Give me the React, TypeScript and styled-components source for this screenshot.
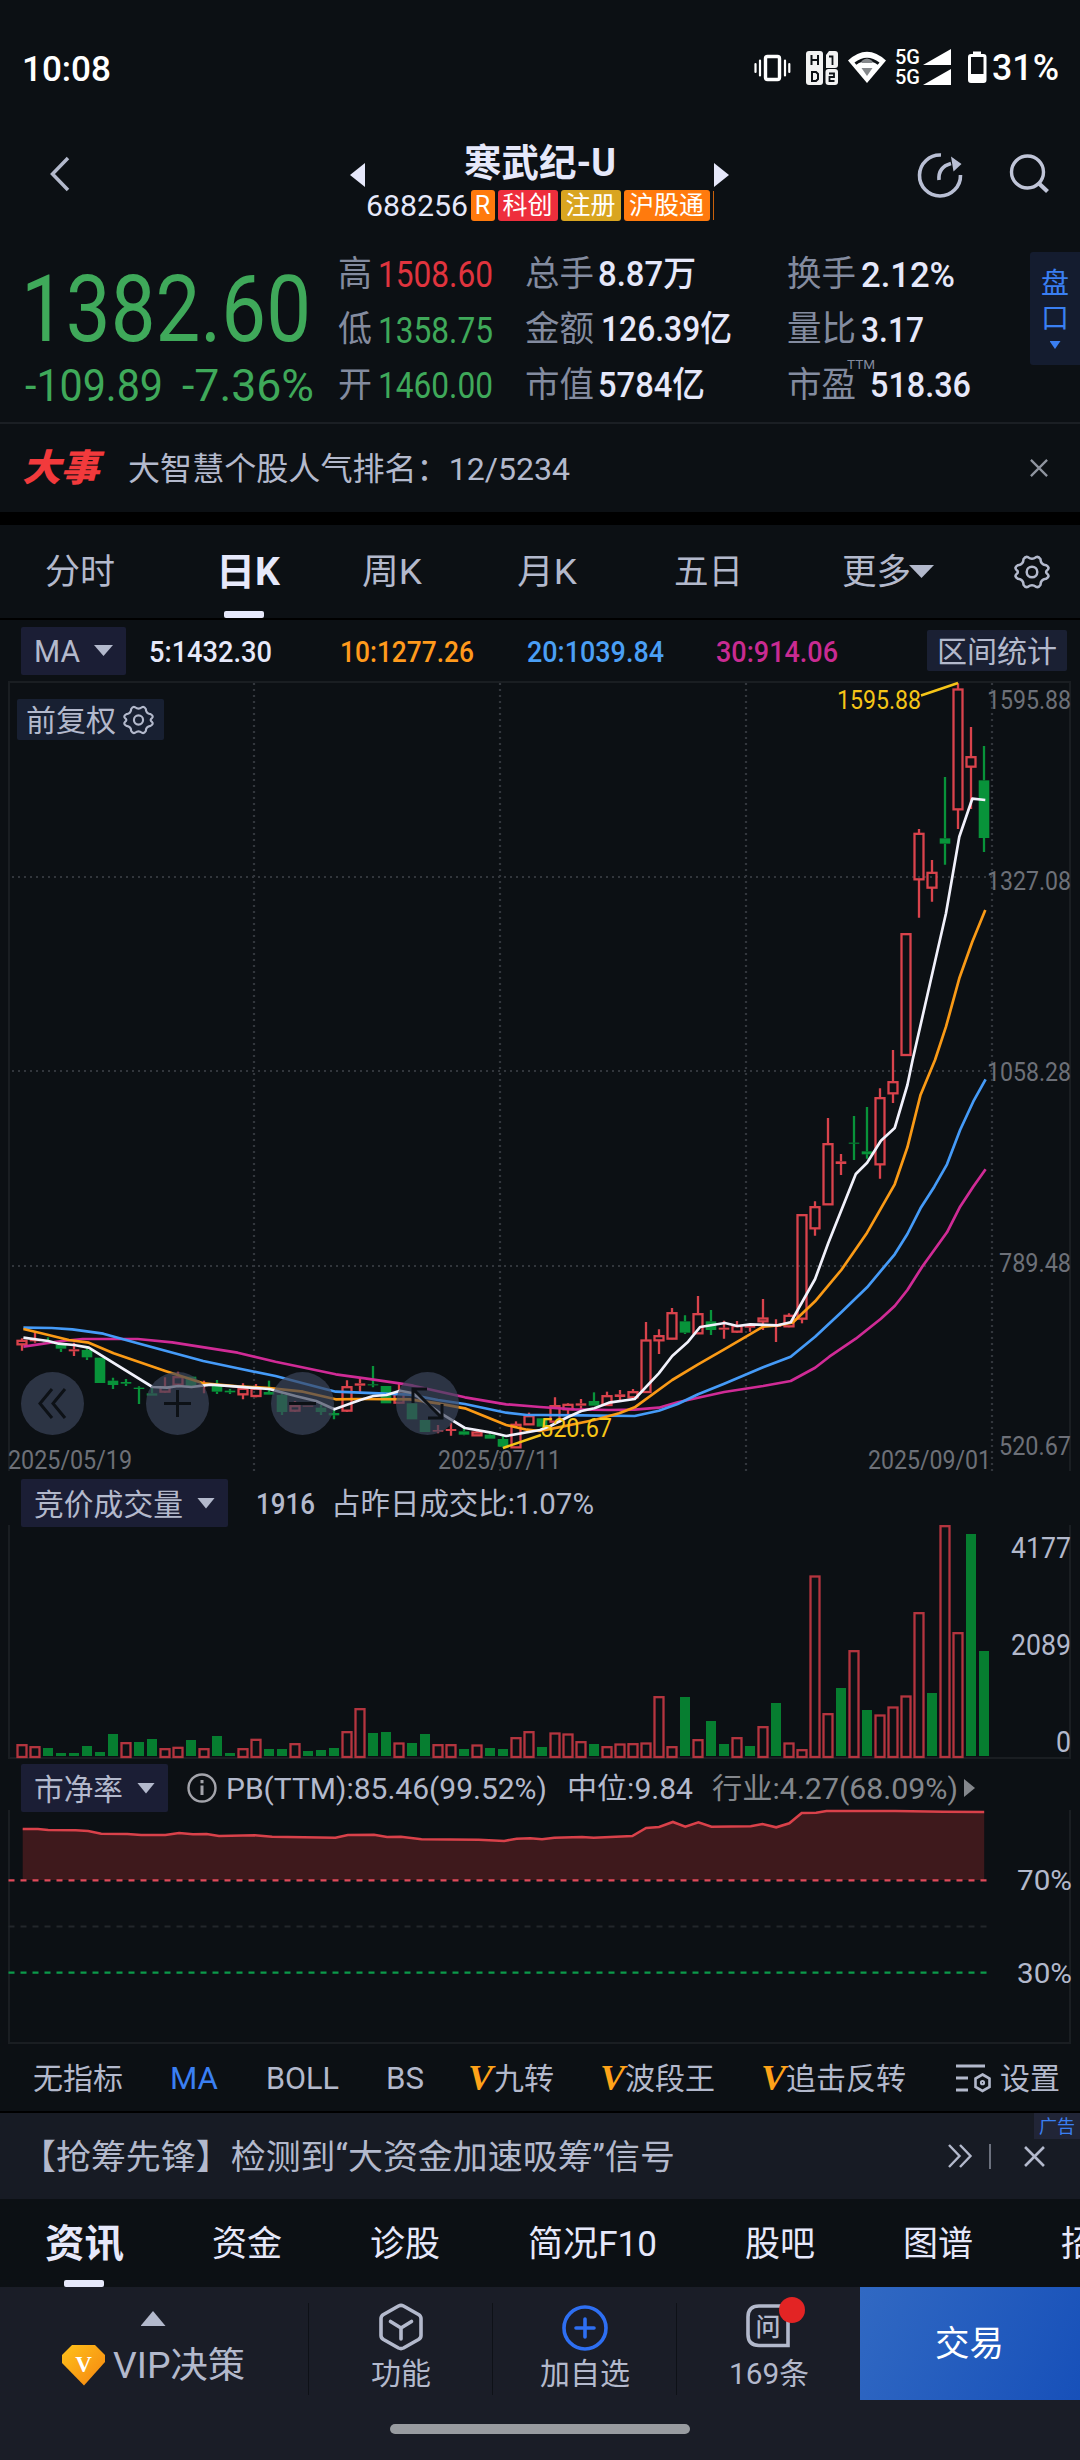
import React, { useLayoutEffect, useRef, useState } from "react";
import styled, { createGlobalStyle } from "styled-components";

const c = {
  bg: "#0c1014",
  panel: "#1a1d27",
  text: "#b3b9cc",
  bright: "#e6e8fa",
  label: "#838b9f",
  red: "#e0343e",
  green: "#3fa95a",
  candleRed: "#d9434c",
  candleGreen: "#08933a",
  blue: "#3a7ff2",
  orange: "#ff9a1c",
  axis: "#6d7078",
};

const FONT = `Roboto, "Noto Sans CJK SC", sans-serif`;

const Global = createGlobalStyle`
  * { box-sizing: border-box; }
  body { margin: 0; background: ${c.bg}; font-family: ${FONT}; }
  svg { display: block; flex: none; overflow: visible; }
  svg text { font-family: ${FONT}; }
`;

const Page = styled.main`
  width: 1080px;
  height: 2460px;
  overflow: hidden;
  display: flex;
  flex-direction: column;
  background: ${c.bg};
  color: ${c.text};
`;

/* Text that is condensed or widened to a known column width */
const FitBox = styled.span<{ $w: number; $size: number; $ml: number; $color?: string; $weight: number; $italic?: boolean; $serif?: boolean }>`
  display: block;
  flex: none;
  width: ${(p) => p.$w}px;
  margin-left: ${(p) => p.$ml}px;
  padding-top: 3px;
  font-size: ${(p) => p.$size}px;
  line-height: 1.2;
  font-weight: ${(p) => p.$weight};
  font-style: ${(p) => (p.$italic ? "italic" : "normal")};
  font-family: ${(p) => (p.$serif ? `"Liberation Serif", serif` : FONT)};
  color: ${(p) => p.$color ?? "inherit"};
  white-space: nowrap;
`;
const FitInner = styled.span`
  display: inline-block;
  transform-origin: 0 50%;
`;

type FitProps = { w: number; size: number; ml?: number; color?: string; weight?: number; italic?: boolean; serif?: boolean; children: React.ReactNode };
function Fit({ w, size, ml = 0, color, weight = 400, italic, serif, children }: FitProps) {
  const ref = useRef<HTMLSpanElement>(null);
  const [scale, setScale] = useState(1);
  useLayoutEffect(() => {
    if (ref.current) setScale((w / ref.current.getBoundingClientRect().width) * scale);
    // eslint-disable-next-line react-hooks/exhaustive-deps
  }, [w, size]);
  return (
    <FitBox $w={w} $size={size} $ml={ml} $color={color} $weight={weight} $italic={italic} $serif={serif}>
      <FitInner ref={ref} style={{ transform: `scaleX(${scale})` }}>{children}</FitInner>
    </FitBox>
  );
}

const Bar = styled.div<{ $h: number; $pl?: number; $pt?: number; $bg?: string; $line?: boolean }>`
  flex: none;
  height: ${(p) => p.$h}px;
  padding-left: ${(p) => p.$pl ?? 0}px;
  padding-top: ${(p) => p.$pt ?? 0}px;
  display: flex;
  align-items: center;
  background: ${(p) => p.$bg ?? "transparent"};
  border-bottom: ${(p) => (p.$line ? "2px solid #000" : "none")};
`;
const Gap = styled.i<{ $w: number }>`
  flex: none;
  width: ${(p) => p.$w}px;
`;

/* ---------- status bar ---------- */
const StatusBar = styled(Bar)`
  color: #fff;
`;
function StatusIcons() {
  return (
    <svg width="235" height="40" viewBox="753 47 235 40" fill="none" stroke="#fff">
      <g strokeWidth="2.2" strokeLinecap="round">
        <rect x="765.5" y="55.5" width="14" height="23" rx="2" strokeWidth="3.400" />
        <path d="M755.5 63v8M760 59.5v15M785 59.5v15M789.3 63v8" />
      </g>
      <g stroke="none">
        <rect x="806" y="50" width="17" height="34" rx="3" fill="#f2f2f2" />
        <path d="M829 50h6q3 0 3 3v11q0 3-3 3h-9v-13z" fill="#f2f2f2" />
        <rect x="825.500" y="68" width="12.500" height="16" rx="3" fill="#f2f2f2" />
      </g>
      <g stroke={c.bg} strokeWidth="2">
        <path d="M811.500 54v10M818 54v10M811.500 59h7" />
        <path d="M812 71v9h4l2-2v-5l-2-2z" />
        <path d="M829 55.500h3.500v8.500M829 72.500h5v3.500h-4.500v4h5" strokeWidth="1.800" />
      </g>
      <g stroke="none">
        <path d="M848 59.500q19-17.500 38 0l-19 22.500z" fill="#fff" />
        <path d="M854.500 61.500q12.500-9.500 25 0l-1.800 2.300q-10.700-7.500-21.400 0z" fill={c.bg} />
        <path d="M861.500 60q5.500-5 11 0v2h-11zM861.500 67h11l-5.500 8z" fill="#85888b" />
        <path d="M923 64L951 48v16zM923 84l28-16v16z" fill="#fff" />
      </g>
      <g fill="#fff" stroke="none" fontSize="20" fontWeight="500">
        <text x="895" y="63" textLength="25" lengthAdjust="spacingAndGlyphs">5G</text>
        <text x="895" y="83" textLength="25" lengthAdjust="spacingAndGlyphs">5G</text>
      </g>
      <rect x="969.500" y="54.500" width="15.500" height="26" rx="1.500" strokeWidth="3" />
      <path d="M973 50.500h8v4h-8zM969 73h17v8h-17z" fill="#fff" stroke="none" />
    </svg>
  );
}

/* ---------- header ---------- */
const Header = styled.header`
  flex: none;
  height: 107px;
  display: flex;
  align-items: flex-start;
  padding: 3px 0 0 49px;
`;
const TitleBlock = styled.div`
  width: 349px;
  display: flex;
  flex-direction: column;
  align-items: center;
  padding-top: 3px;
`;
const CodeRow = styled.div`
  display: flex;
  align-items: center;
  gap: 3px;
  height: 32px;
  color: ${c.bright};
  margin-top: 3px;
`;
const Tag = styled.span<{ $bg: string; $w: number }>`
  width: ${(p) => p.$w}px;
  height: 31px;
  border-radius: 3px;
  background: ${(p) => p.$bg};
  color: #fff;
  font-size: 25px;
  line-height: 32px;
  text-align: center;
  white-space: nowrap;
`;
const TagEdge = styled.i`
  width: 1px;
  height: 29px;
  background: #c9600a;
`;
const IconSlot = styled.div<{ $mt?: number; $ml: number }>`
  margin-top: ${(p) => p.$mt ?? 0}px;
  margin-left: ${(p) => p.$ml}px;
`;

/* ---------- quote ---------- */
const Quote = styled.section`
  flex: none;
  height: 185px;
  display: flex;
  border-bottom: 2px solid #1b1f24;
`;
const PriceColumn = styled.div`
  width: 338px;
  padding: 13px 0 0 21px;
  color: ${c.green};
`;
const ChangeRow = styled.div`
  display: flex;
  margin-top: -8px;
`;
const Stats = styled.div<{ $w: number }>`
  width: ${(p) => p.$w}px;
  display: flex;
  flex-direction: column;
  padding-top: 7px;
`;
const Stat = styled.div`
  height: 55.3px;
  display: flex;
  align-items: center;
  color: ${c.label};
  position: relative;
`;
const Ttm = styled.sup`
  position: absolute;
  left: 60px;
  top: 0;
  font-size: 13.5px;
  line-height: 14px;
`;
const SideTab = styled.div`
  width: 50px;
  height: 113px;
  margin: 13px 0 0 auto;
  background: #141c2f;
  border-radius: 3px 0 0 3px;
  color: ${c.blue};
  display: flex;
  flex-direction: column;
  align-items: center;
  gap: 0;
  padding-top: 14px;
  font-size: 28px;
  line-height: 35px;
`;

const Chip = styled.div<{ $w: number; $h: number; $bg?: string }>`
  flex: none;
  width: ${(p) => p.$w}px;
  height: ${(p) => p.$h}px;
  display: flex;
  align-items: center;
  background: ${(p) => p.$bg ?? "#1b1e35"};
  border-radius: 2px;
`;
const Tri = styled.i<{ $w: number; $h: number; $ml?: number; $mt?: number; $color?: string; $up?: boolean }>`
  display: block;
  flex: none;
  width: ${(p) => p.$w}px;
  height: ${(p) => p.$h}px;
  margin-left: ${(p) => p.$ml ?? 0}px;
  margin-top: ${(p) => p.$mt ?? 0}px;
  background: ${(p) => p.$color ?? c.text};
  clip-path: ${(p) => (p.$up ? "polygon(50% 0, 100% 100%, 0 100%)" : "polygon(0 0, 100% 0, 50% 100%)")};
`;
const SideTri = styled.i<{ $w: number; $h: number; $ml?: number; $left?: boolean; $color?: string }>`
  display: block;
  flex: none;
  width: ${(p) => p.$w}px;
  height: ${(p) => p.$h}px;
  margin-left: ${(p) => p.$ml ?? 0}px;
  background: ${(p) => p.$color ?? c.bright};
  clip-path: ${(p) => (p.$left ? "polygon(100% 0, 100% 100%, 0 50%)" : "polygon(0 0, 100% 50%, 0 100%)")};
`;

const TabItem = styled.div<{ $h: number }>`
  height: ${(p) => p.$h}px;
  display: flex;
  align-items: center;
  position: relative;
`;
const Underline = styled.i<{ $left: number }>`
  position: absolute;
  bottom: 0;
  left: ${(p) => p.$left}px;
  width: 40px;
  height: 7px;
  border-radius: 2px;
  background: ${c.bright};
`;

const Gear = ({ w, h, ml }: { w: number; h: number; ml: number }) => (
  <IconSlot $ml={ml}>
    <svg width={w} height={h} viewBox="0 0 36 34" fill="none" stroke={c.text} strokeWidth="2.500" strokeLinejoin="round">
      <path d="M9.500 4.200Q11.500 1 14 2.200Q18 5.200 22 2.200Q24.500 1 26.500 4.200Q26.500 9.500 32 10.200Q36 12.500 33.700 14.700Q30.500 17 33.700 19.300Q36 21.500 32 23.800Q26.500 24.500 26.500 29.800Q24.500 33 22 31.800Q18 28.800 14 31.800Q11.500 33 9.500 29.800Q9.500 24.500 4 23.800Q0 21.500 2.300 19.300Q5.500 17 2.300 14.700Q0 12.500 4 10.200Q9.500 9.500 9.500 4.200Z" />
      <circle cx="18" cy="17" r="5.300" />
    </svg>
  </IconSlot>
);

const Cross = ({ w, ml, color = c.text }: { w: number; ml: number; color?: string }) => (
  <IconSlot $ml={ml}>
    <svg width={w} height={w} viewBox="0 0 20 20" stroke={color} strokeWidth="2.500">
      <path d="M1 1L19 19M19 1L1 19" />
    </svg>
  </IconSlot>
);

/* ---------- chart data ---------- */
const STEP = 13;
const X0 = 22;
const barX = (i: number) => X0 + STEP * i;

type Candle = [0 | 1, number, number, number, number]; // rising, body top, body bottom, high, low
const early: Candle[] = [
  [1, 241, 253, 235, 272], [1, 240, 244, 213, 248], [0, 245, 252, 232, 252], [0, 255, 266, 250, 276], [1, 268, 274, 248, 288],
  [0, 270, 292, 262, 300], [0, 293, 369, 293, 369], [0, 362, 375, 353, 387], [0, 366, 371, 357, 378], [0, 383, 387, 379, 432],
  [0, 400, 407, 380, 407], [1, 380, 395, 352, 398], [1, 350, 374, 335, 382], [0, 350, 378, 350, 378], [1, 374, 378, 362, 400],
  [0, 378, 395, 360, 402], [0, 392, 397, 387, 402], [1, 385, 403, 370, 418], [1, 385, 408, 372, 412], [0, 396, 404, 362, 404],
  [0, 405, 456, 395, 465], [1, 437, 452, 423, 456], [1, 437, 440, 437, 440], [0, 443, 456, 435, 465], [0, 459, 466, 450, 478],
  [1, 380, 452, 361, 456], [1, 370, 377, 352, 396], [0, 373, 376, 318, 382], [0, 378, 430, 378, 430], [1, 400, 428, 370, 430],
  [0, 430, 478, 430, 478], [0, 480, 516, 480, 516], [1, 510, 515, 495, 520], [1, 507, 513, 488, 527], [0, 514, 524, 500, 526],
  [1, 516, 526, 514, 528], [0, 524, 536, 520, 536], [0, 537, 560, 528, 563], [1, 493, 562, 484, 562], [1, 467, 493, 458, 493],
];
const middle: Candle[] = [
  [0, 1075, 1100, 1075, 1100], [1, 1037, 1085, 1012, 1090], [1, 1033, 1048, 1030, 1065], [1, 1030, 1037, 1017, 1050], [0, 1023, 1037, 997, 1037],
  [1, 1007, 1035, 995, 1035], [1, 1003, 1011, 990, 1020], [1, 995, 1012, 987, 1018], [1, 840, 996, 786, 998], [1, 827, 841, 808, 882],
  [1, 758, 836, 744, 838], [0, 784, 818, 766, 822], [1, 761, 820, 708, 822], [0, 784, 810, 750, 825], [1, 803, 809, 782, 836],
  [1, 797, 815, 783, 818], [1, 795, 803, 790, 815], [1, 774, 784, 717, 810], [1, 795, 801, 778, 846], [1, 766, 799, 760, 802],
  [1, 464, 776, 464, 790], [1, 440, 505, 424, 527], [1, 251, 433, 174, 433], [1, 304, 312, 282, 345], [0, 248, 251, 168, 300],
  [0, 274, 283, 141, 296], [1, 113, 313, 85, 356], [1, 65, 100, -30, 129],
];
const late: Candle[] = [
  [1, 821, 1185, 821, 1185], [1, 520, 658, 507, 773], [1, 637, 683, 600, 725], [0, 535, 551, 351, 614], [1, 87, 448, 70, 507],
  [1, 290, 320, 201, 447], [0, 361, 534, 258, 576],
];
const at = (base: number) => (k: Candle): Candle => [k[0], base + k[1] / 3, base + k[2] / 3, base + k[3] / 3, base + k[4] / 3];
const candles: Candle[] = [...early.map(at(1260)), ...middle.map(at(1060)), ...late.map(at(660))];

type P = [number, number];
const path = (a: P[], b: P[], d: P[] = []) =>
  [
    ...a.map(([x, y]): P => [x / 2.904, 1260 + y / 3]),
    ...b.map(([x, y]): P => [540 + x / 2.904, 1060 + y / 3]),
    ...d.map(([x, y]): P => [740 + x / 3, 660 + y / 3]),
  ].map(([x, y]) => `${x.toFixed(1)},${y.toFixed(1)}`).join(" ");

const averages = [
  { color: "#d02b96", points: path(
    [[68, 260], [180, 243], [240, 237], [400, 237], [500, 247], [690, 278], [800, 305], [975, 343], [1060, 355], [1160, 370], [1200, 377], [1350, 412], [1470, 433]],
    [[0, 1041], [100, 1048], [200, 1050], [275, 1049], [345, 1043], [400, 1027], [535, 996], [648, 978], [728, 963], [799, 923], [840, 890], [917, 836], [990, 776], [1030, 738], [1067, 690], [1110, 620], [1182, 517], [1220, 440], [1258, 380], [1294, 328]]) },
  { color: "#459bf8", points: path(
    [[68, 203], [150, 204], [210, 208], [300, 221], [400, 250], [590, 303], [690, 325], [800, 348], [880, 370], [975, 395], [1100, 400], [1190, 404], [1272, 420], [1350, 432], [1470, 458], [1530, 465]],
    [[0, 1065], [120, 1066], [275, 1068], [345, 1052], [400, 1032], [459, 1003], [535, 971], [648, 922], [728, 890], [799, 830], [875, 757], [950, 682], [1030, 583], [1067, 522], [1105, 445], [1145, 380], [1182, 313], [1220, 210], [1258, 125], [1294, 58]]) },
  { color: "#fa9a16", points: path(
    [[68, 207], [120, 220], [200, 240], [258, 248], [330, 280], [480, 333], [590, 370], [690, 379], [782, 384], [880, 395], [975, 418], [1046, 417], [1190, 418], [1272, 430], [1350, 445], [1470, 495], [1530, 509]],
    [[0, 1113], [50, 1103], [158, 1080], [230, 1060], [275, 1042], [384, 960], [459, 913], [535, 868], [648, 800], [690, 796], [735, 787], [799, 724], [875, 630], [950, 518], [1030, 373], [1067, 262], [1105, 105], [1147, 0]],
    [[618, 1100], [658, 955], [697, 845], [736, 750]]) },
  { color: "#f1f1fb", points: path(
    [[68, 233], [140, 243], [170, 251], [215, 255], [258, 263], [443, 381], [485, 383], [518, 378], [556, 381], [612, 374], [690, 380], [782, 387], [858, 408], [918, 423], [971, 448], [1046, 420], [1084, 408], [1122, 405], [1162, 392], [1200, 400], [1272, 455], [1350, 504], [1423, 517], [1470, 528]],
    [[0, 1110], [30, 1098], [80, 1072], [120, 1053], [158, 1045], [200, 1028], [275, 1017], [345, 940], [384, 888], [430, 845], [465, 801], [537, 789], [573, 798], [611, 793], [690, 796], [728, 787], [799, 657], [837, 550], [917, 342], [950, 308], [990, 242], [1030, 204], [1067, 75], [1082, 0]],
    [[618, 760], [658, 530], [697, 416], [736, 420]]) },
];

const volumes = ("r734,r740,g744,g759,g759,g738,g756,g702,r728,g726,g717,r746,r742,g720,r746,g708,g759,r746,r718,g747,g747,r731,g753,g750,g744," +
  "r695,r626,g699,g696,r729,g729,g702,r734,r734,g747,r735,g744,g747,r713,r695,g741,r699,r702,r725,g732,r740,r732,r731,r729,r590,r740,g591,r719," +
  "g663,g732,r713,g738,r680,g609,r729,r749,r228,r641,g564,r452,g630,r645,r621,r588,r338,g579,r77,r398,g102,g453")
  .split(",").map((s) => ({ up: s[0] === "r", y: 1500 + Number(s.slice(1)) / 3 }));

const pbPoints = ([[33, 207], [55, 207], [70, 210], [110, 211], [128, 213], [147, 221], [185, 222], [205, 225], [240, 225], [260, 219], [280, 223], [300, 222],
  [318, 228], [370, 226], [395, 230], [487, 233], [505, 225], [543, 224], [562, 231], [582, 230], [612, 238], [695, 239], [732, 243], [750, 236], [770, 235],
  [787, 238], [805, 233], [845, 231], [862, 233], [918, 228], [938, 204], [957, 201], [977, 186], [995, 200], [1014, 187], [1033, 200], [1090, 199], [1107, 192],
  [1127, 202], [1146, 190], [1164, 159], [1185, 158], [1200, 153], [1300, 153], [1370, 155], [1429, 156]] as P[])
  .map(([x, y]) => `${(x / 1.4519).toFixed(1)},${(1760 + y / 3).toFixed(1)}`).join(" ");

const AxisText = ({ x1, x2, y, size, color = c.axis, children }: { x1: number; x2: number; y: number; size: number; color?: string; children: string }) => (
  <text x={x1} y={y + size * 0.355} fontSize={size} fill={color} textLength={x2 - x1} lengthAdjust="spacingAndGlyphs">{children}</text>
);

const ChartArea = styled.div`
  flex: none;
  position: relative;
  height: 790px;
`;
const AdjustChip = styled(Chip)`
  position: absolute;
  left: 17px;
  top: 18px;
`;
const RoundTools = styled.div`
  position: absolute;
  left: 21px;
  top: 691px;
  display: flex;
  gap: 62px;
`;
const RoundButton = styled.button`
  width: 63px;
  height: 63px;
  padding: 0;
  border: 0;
  border-radius: 50%;
  background: rgba(61, 70, 92, 0.68);
`;
const toolPaths = [
  "M31 17L19 31.500L31 46M44 17L32 31.500L44 46",
  "M31.500 18v27M18 31.500h27",
  "M18 31.500h27",
  "M17 17L46 46M17 31V17H31M46 32V46H32",
];

function PriceChart() {
  return (
    <ChartArea>
      <svg width="1080" height="790" viewBox="0 681 1080 790" fill="none">
        <g stroke="#32363c" strokeWidth="2.200" strokeDasharray="2 4">
          {[254, 500, 746, 992].map((x) => <path key={x} d={`M${x} 683V1471`} />)}
          {[877, 1071, 1266].map((y) => <path key={y} d={`M12 ${y}H992`} />)}
        </g>
        <path d="M9 1471V682H1070V1471" stroke="#1a1e22" strokeWidth="2" />
        {candles.map(([up, t, b, hi, lo], i) => {
          const x = barX(i);
          const color = up ? c.candleRed : c.candleGreen;
          const h = Math.max(b - t, 1);
          return (
            <g key={i} stroke={color} strokeWidth="2.300">
              <path d={`M${x} ${hi}V${t}M${x} ${b}V${lo}`} />
              {up && h > 3
                ? <rect x={x - 4.5} y={t + 0.5} width="9" height={h - 0.5} />
                : <rect x={x - 5.3} y={t} width="10.600" height={h} fill={color} stroke="none" />}
            </g>
          );
        })}
        <g strokeWidth="2.700" strokeLinejoin="round">
          {averages.map((a) => <polyline key={a.color} points={a.points} stroke={a.color} />)}
        </g>
        <path d="M921 695.500L958 683M503 1448L541 1435" stroke="#f5c518" strokeWidth="2.500" />
        <AxisText x1={837} x2={921} y={700} size={25.5} color="#f5c518">1595.88</AxisText>
        <AxisText x1={540} x2={612} y={1427.5} size={26} color="#f5c518">520.67</AxisText>
        <AxisText x1={987} x2={1071} y={700} size={25.5}>1595.88</AxisText>
        <AxisText x1={987} x2={1071} y={881} size={25.5}>1327.08</AxisText>
        <AxisText x1={987} x2={1071} y={1072} size={25.5}>1058.28</AxisText>
        <AxisText x1={999} x2={1071} y={1263} size={25.5}>789.48</AxisText>
        <AxisText x1={999} x2={1071} y={1446} size={25.5}>520.67</AxisText>
        <AxisText x1={8} x2={132} y={1460} size={25.5}>2025/05/19</AxisText>
        <AxisText x1={438} x2={561} y={1460} size={25.5}>2025/07/11</AxisText>
        <AxisText x1={868} x2={991} y={1460} size={25.5}>2025/09/01</AxisText>
      </svg>
      <AdjustChip $w={147} $h={41} $bg="#182032">
        <Fit w={90} size={30} ml={9}>前复权</Fit>
        <Gear w={31} h={30} ml={7} />
      </AdjustChip>
      <RoundTools>
        {toolPaths.map((d) => (
          <RoundButton key={d}>
            <svg width="63" height="63" fill="none" stroke="#0d1116" strokeWidth="3"><path d={d} /></svg>
          </RoundButton>
        ))}
      </RoundTools>
    </ChartArea>
  );
}

function VolumeChart() {
  return (
    <svg width="1080" height="232" viewBox="0 1527 1080 232" fill="none">
      <path d="M9 1525V1758H1070V1525" stroke="#1a1e22" strokeWidth="2" />
      {volumes.map((v, i) => v.up
        ? <rect key={i} x={barX(i) - 4.5} y={v.y + 0.5} width="9" height={1756.500 - v.y} stroke="#b4353f" strokeWidth="2.300" />
        : <rect key={i} x={barX(i) - 5} y={v.y} width="10" height={1756 - v.y} fill="#067e30" />)}
      <AxisText x1={1011} x2={1071} y={1548} size={29} color={c.text}>4177</AxisText>
      <AxisText x1={1011} x2={1071} y={1645} size={29} color={c.text}>2089</AxisText>
      <AxisText x1={1056} x2={1071} y={1742} size={29} color={c.text}>0</AxisText>
    </svg>
  );
}

function PbChart() {
  return (
    <svg width="1080" height="232" viewBox="0 1812 1080 232" fill="none">
      <path d="M9 1810V2043H1070V1810" stroke="#1a1e22" strokeWidth="2" />
      <polygon points={`${pbPoints} 984.200,1880 22.700,1880`} fill="#3e191c" />
      <polyline points={pbPoints} stroke="#d9414a" strokeWidth="2.600" />
      <g strokeWidth="2.200" strokeDasharray="6 6">
        <path d="M8.500 1880.300H987" stroke="#e04a5a" />
        <path d="M8.500 1926.500H987" stroke="#23272b" />
        <path d="M8.500 1972.700H987" stroke="#0b9a4a" />
      </g>
      <AxisText x1={1017} x2={1072} y={1880} size={28.5} color={c.text}>70%</AxisText>
      <AxisText x1={1017} x2={1072} y={1973} size={28.5} color={c.text}>30%</AxisText>
    </svg>
  );
}

/* ---------- bottom ---------- */
const AdBadge = styled.span`
  position: absolute;
  right: 0;
  top: 0;
  width: 46px;
  height: 26px;
  font-size: 18px;
  line-height: 28px;
  text-align: center;
  color: ${c.blue};
  background: #212537;
`;
const AdBar = styled(Bar)`
  position: relative;
`;
const Dock = styled.footer`
  flex: none;
  height: 113px;
  display: flex;
  background: ${c.panel};
`;
const DockCell = styled.div<{ $w: number; $pt: number }>`
  width: ${(p) => p.$w}px;
  padding-top: ${(p) => p.$pt}px;
  display: flex;
  flex-direction: column;
  align-items: center;
  gap: 3px;
`;
const Divider = styled.i`
  width: 1px;
  height: 92px;
  margin: 16px 0 0;
  background: #0e1117;
`;
const VipRow = styled.div`
  display: flex;
  align-items: center;
  margin-top: 13px;
`;
const TradeButton = styled.button`
  width: 220px;
  height: 113px;
  padding: 0 0 0 75px;
  border: 0;
  display: flex;
  align-items: center;
  color: #fff;
  background: linear-gradient(115deg, #3169c3, #1750b9);
`;
const HomeArea = styled.div`
  flex: 1;
  display: flex;
  justify-content: center;
  padding-top: 24px;
  background: ${c.panel};
`;
const HomePill = styled.i`
  width: 300px;
  height: 10px;
  border-radius: 5px;
  background: #989ba0;
`;

const VMark = ({ ml }: { ml: number }) => <Fit w={25} size={36} ml={ml} weight={700} italic serif color="#ffa319">V</Fit>;

export default function App() {
  return (
    <Page>
      <Global />
      <StatusBar $h={132} $pt={3} $pl={22}>
        <Fit w={89} size={35.5} weight={500}>10:08</Fit>
        <Gap $w={642} />
        <StatusIcons />
        <Fit w={67} size={36} ml={4} weight={500}>31%</Fit>
      </StatusBar>

      <Header>
        <IconSlot $mt={21} $ml={0}>
          <svg width="22" height="36" viewBox="0 0 22 36" fill="none" stroke={c.text} strokeWidth="3.500"><path d="M19 2L3.500 18L19 34" /></svg>
        </IconSlot>
        <IconSlot $mt={28} $ml={279}><SideTri $w={15} $h={24} $left /></IconSlot>
        <TitleBlock>
          <Fit w={152} size={38} weight={700} color={c.bright}>寒武纪-U</Fit>
          <CodeRow>
            <Fit w={102} size={29.5}>688256</Fit>
            <Tag $bg="#ff7a0d" $w={24}>R</Tag>
            <Tag $bg="#ee2e3c" $w={60}>科创</Tag>
            <Tag $bg="#d9a520" $w={60}>注册</Tag>
            <Tag $bg="#ff7a0d" $w={86}>沪股通</Tag>
            <TagEdge />
          </CodeRow>
        </TitleBlock>
        <IconSlot $mt={28} $ml={0}><SideTri $w={15} $h={24} /></IconSlot>
        <IconSlot $mt={16} $ml={188}>
          <svg width="46" height="48" viewBox="0 0 46 48" fill="none" stroke="#b9bfd4" strokeWidth="3.600">
            <path d="M24 4A20.500 20.500 0 1 0 43.500 24" />
            <path d="M22 29Q21 16 34 12.500" />
            <path d="M34 5.500L44.500 13L36.500 20.500Z" fill="#b9bfd4" stroke="none" />
          </svg>
        </IconSlot>
        <IconSlot $mt={18} $ml={46}>
          <svg width="42" height="42" viewBox="0 0 42 42" fill="none" stroke="#c0c5d8" strokeWidth="3.400">
            <circle cx="18.500" cy="19" r="16" /><path d="M30 30.500L38.500 38.500" strokeWidth="4.200" />
          </svg>
        </IconSlot>
      </Header>

      <Quote>
        <PriceColumn>
          <Fit w={290} size={92}>1382.60</Fit>
          <ChangeRow>
            <Fit w={138} size={44} ml={4}>-109.89</Fit>
            <Fit w={132} size={44} ml={19}>-7.36%</Fit>
          </ChangeRow>
        </PriceColumn>
        <Stats $w={187}>
          <Stat><Fit w={34} size={35}>高</Fit><Fit w={115} size={36.5} ml={6} color={c.red}>1508.60</Fit></Stat>
          <Stat><Fit w={34} size={35}>低</Fit><Fit w={115} size={36.5} ml={6} color={c.green}>1358.75</Fit></Stat>
          <Stat><Fit w={34} size={35}>开</Fit><Fit w={115} size={36.5} ml={6} color={c.green}>1460.00</Fit></Stat>
        </Stats>
        <Stats $w={262}>
          <Stat><Fit w={69} size={35}>总手</Fit><Fit w={98} size={35} ml={4} weight={500} color={c.bright}>8.87万</Fit></Stat>
          <Stat><Fit w={69} size={35}>金额</Fit><Fit w={131} size={35} ml={7} weight={500} color={c.bright}>126.39亿</Fit></Stat>
          <Stat><Fit w={69} size={35}>市值</Fit><Fit w={107} size={35} ml={4} weight={500} color={c.bright}>5784亿</Fit></Stat>
        </Stats>
        <Stats $w={200}>
          <Stat><Fit w={69} size={35}>换手</Fit><Fit w={94} size={35.5} ml={5} weight={500} color={c.bright}>2.12%</Fit></Stat>
          <Stat><Fit w={69} size={35}>量比</Fit><Fit w={63} size={35.5} ml={5} weight={500} color={c.bright}>3.17</Fit></Stat>
          <Stat><Fit w={69} size={35}>市盈</Fit><Fit w={101} size={35.5} ml={14} weight={500} color={c.bright}>518.36</Fit><Ttm>TTM</Ttm></Stat>
        </Stats>
        <SideTab><span>盘</span><span>口</span><Tri $w={11} $h={8} $mt={5} $color={c.blue} /></SideTab>
      </Quote>

      <Bar $h={88} $pl={22}>
        <Fit w={77} size={37} weight={900} italic color="#f23a3c">大事</Fit>
        <Fit w={442} size={32} ml={29}>大智慧个股人气排名：12/5234</Fit>
        <Cross w={18} ml={460} color="#8f949f" />
      </Bar>
      <Bar $h={13} $bg="#000" />

      <Bar $h={95} $line $pl={45}>
        <Fit w={70} size={35}>分时</Fit>
        <Gap $w={101} />
        <TabItem $h={93}>
          <Fit w={64} size={38} weight={700} color={c.bright}>日K</Fit>
          <Underline $left={8} />
        </TabItem>
        <Fit w={60} size={35} ml={82}>周K</Fit>
        <Fit w={60} size={35} ml={95}>月K</Fit>
        <Fit w={69} size={35} ml={97}>五日</Fit>
        <Fit w={69} size={35} ml={99}>更多</Fit>
        <Tri $w={25} $h={13} $ml={-2} />
        <Gear w={36} h={34} ml={80} />
      </Bar>

      <Bar $h={61} $pl={21}>
        <Chip $w={105} $h={48}>
          <Fit w={46} size={31} ml={13}>MA</Fit>
          <Tri $w={19} $h={11} $ml={14} />
        </Chip>
        <Fit w={123} size={30} ml={23} weight={500} color={c.bright}>5:1432.30</Fit>
        <Fit w={134} size={30} ml={68} weight={500} color={c.orange}>10:1277.26</Fit>
        <Fit w={137} size={30} ml={53} weight={500} color="#4a9ff5">20:1039.84</Fit>
        <Fit w={122} size={30} ml={52} weight={500} color="#c92b92">30:914.06</Fit>
        <Gap $w={89} />
        <Chip $w={140} $h={41} $bg="#1a2033"><Fit w={120} size={30} ml={10}>区间统计</Fit></Chip>
      </Bar>

      <PriceChart />

      <Bar $h={56} $pt={8} $pl={21}>
        <Chip $w={207} $h={48}><Fit w={149} size={30} ml={13}>竞价成交量</Fit><Tri $w={18} $h={11} $ml={14} /></Chip>
        <Fit w={59} size={29.5} ml={28} weight={500}>1916</Fit>
        <Fit w={263} size={29.5} ml={16}>占昨日成交比:1.07%</Fit>
      </Bar>
      <VolumeChart />
      <Bar $h={53} $pt={5} $pl={21}>
        <Chip $w={147} $h={48}><Fit w={89} size={30} ml={13}>市净率</Fit><Tri $w={18} $h={11} $ml={14} /></Chip>
        <IconSlot $ml={19}>
          <svg width="30" height="30" viewBox="0 0 30 30" fill="none" stroke="#a3a4ab" strokeWidth="2.400">
            <circle cx="15" cy="15" r="13.500" /><path d="M15 12.500v9.500M15 7v3.200" strokeWidth="3" />
          </svg>
        </IconSlot>
        <Fit w={321} size={29} ml={9}>PB(TTM):85.46(99.52%)</Fit>
        <Fit w={126} size={29} ml={20}>中位:9.84</Fit>
        <Fit w={246} size={29} ml={19} color="#84878c">行业:4.27(68.09%)</Fit>
        <SideTri $w={11} $h={18} $ml={6} $color="#84878c" />
      </Bar>
      <PbChart />

      <Bar $h={69} $line $pl={33}>
        <Fit w={90} size={30}>无指标</Fit>
        <Fit w={48} size={30.5} ml={47} color={c.blue}>MA</Fit>
        <Fit w={73} size={30.5} ml={48}>BOLL</Fit>
        <Fit w={38} size={30.5} ml={47}>BS</Fit>
        <VMark ml={44} /><Fit w={60} size={30} ml={1}>九转</Fit>
        <VMark ml={46} /><Fit w={90} size={30} ml={0}>波段王</Fit>
        <VMark ml={46} /><Fit w={120} size={30} ml={0}>追击反转</Fit>
        <IconSlot $ml={50}>
          <svg width="35" height="28" viewBox="0 0 35 28" fill="none" stroke={c.text} strokeWidth="3">
            <path d="M0 2h29M0 14h12M0 26h12" />
            <path d="M26.500 10.500l7 4v8.500l-7 4l-7-4v-8.500z" strokeWidth="2.600" /><circle cx="26.500" cy="18.700" r="1.600" strokeWidth="2" />
          </svg>
        </IconSlot>
        <Fit w={60} size={30} ml={9}>设置</Fit>
      </Bar>

      <AdBar $h={86} $pl={21} $bg="#171b24">
        <Fit w={654} size={34.5}>【抢筹先锋】检测到“大资金加速吸筹”信号</Fit>
        <IconSlot $ml={273}>
          <svg width="25" height="24" viewBox="0 0 25 24" fill="none" stroke={c.text} strokeWidth="2.400"><path d="M1 1L11.500 12L1 23M12 1L22.500 12L12 23" /></svg>
        </IconSlot>
        <IconSlot $ml={16}><svg width="2" height="25"><path d="M1 0v25" stroke="#8a8f9d" strokeWidth="1.500" /></svg></IconSlot>
        <Cross w={21} ml={33} />
        <AdBadge>广告</AdBadge>
      </AdBar>

      <Bar $h={88} $pl={45}>
        <TabItem $h={88}>
          <Fit w={79} size={39} weight={700} color={c.bright}>资讯</Fit>
          <Underline $left={19} />
        </TabItem>
        <Fit w={70} size={35} ml={88} color={c.bright}>资金</Fit>
        <Fit w={70} size={35} ml={88} color={c.bright}>诊股</Fit>
        <Fit w={129} size={35} ml={88} color={c.bright}>简况F10</Fit>
        <Fit w={70} size={35} ml={88} color={c.bright}>股吧</Fit>
        <Fit w={70} size={35} ml={88} color={c.bright}>图谱</Fit>
        <Fit w={70} size={35} ml={88} color={c.bright}>招股</Fit>
      </Bar>

      <Dock>
        <DockCell $w={306} $pt={24}>
          <Tri $w={25} $h={15} $up />
          <VipRow>
            <svg width="43" height="42" viewBox="0 0 43 42">
              <defs>
                <linearGradient id="gem" x1="0" y1="0" x2="1" y2="1"><stop offset="0" stopColor="#ffc21a" /><stop offset="1" stopColor="#f58410" /></linearGradient>
              </defs>
              <path d="M10 1h23l10 10v7L22 41.500L0 19v-8z" fill="url(#gem)" />
              <text x="21.500" y="28" fontSize="23" fontWeight="700" fill="#fff" textAnchor="middle" style={{ fontFamily: "Liberation Serif" }}>V</text>
            </svg>
            <Fit w={132} size={36} ml={8}>VIP决策</Fit>
          </VipRow>
        </DockCell>
        <Gap $w={2} />
        <Divider />
        <DockCell $w={183} $pt={16}>
          <svg width="44" height="48" viewBox="0 0 44 48" fill="none" stroke={c.text} strokeWidth="3.600" strokeLinejoin="round" strokeLinecap="round">
            <path d="M19.500 3Q22 1.800 24.500 3L39.500 11.500Q42 13 42 15.500V32.500Q42 35 39.500 36.500L24.500 45Q22 46.200 19.500 45L4.500 36.500Q2 35 2 32.500V15.500Q2 13 4.500 11.500Z" />
            <path d="M11.500 18.500L22 25L32.500 18.500M22 25V36" />
          </svg>
          <Fit w={60} size={29.5}>功能</Fit>
        </DockCell>
        <Divider />
        <DockCell $w={183} $pt={16}>
          <svg width="48" height="48" viewBox="0 0 48 48" fill="none" stroke="#2e6ff2" strokeWidth="3.600" strokeLinecap="round">
            <circle cx="24" cy="25" r="21" /><path d="M24 16v18M15 25h18" />
          </svg>
          <Fit w={90} size={29.5}>加自选</Fit>
        </DockCell>
        <Divider />
        <DockCell $w={183} $pt={16}>
          <svg width="48" height="48" viewBox="0 0 48 48">
            <path d="M14 3H43V42.500H14Q3 42.500 3 31.500V14Q3 3 14 3Z" fill="none" stroke={c.text} strokeWidth="3.600" />
            <text x="10.500" y="33" fontSize="25" fontWeight="500" fill={c.text}>问</text>
            <circle cx="47" cy="7" r="13" fill="#e32424" />
          </svg>
          <Fit w={80} size={29.5}>169条</Fit>
        </DockCell>
        <TradeButton><Fit w={69} size={35}>交易</Fit></TradeButton>
      </Dock>
      <HomeArea><HomePill /></HomeArea>
    </Page>
  );
}
